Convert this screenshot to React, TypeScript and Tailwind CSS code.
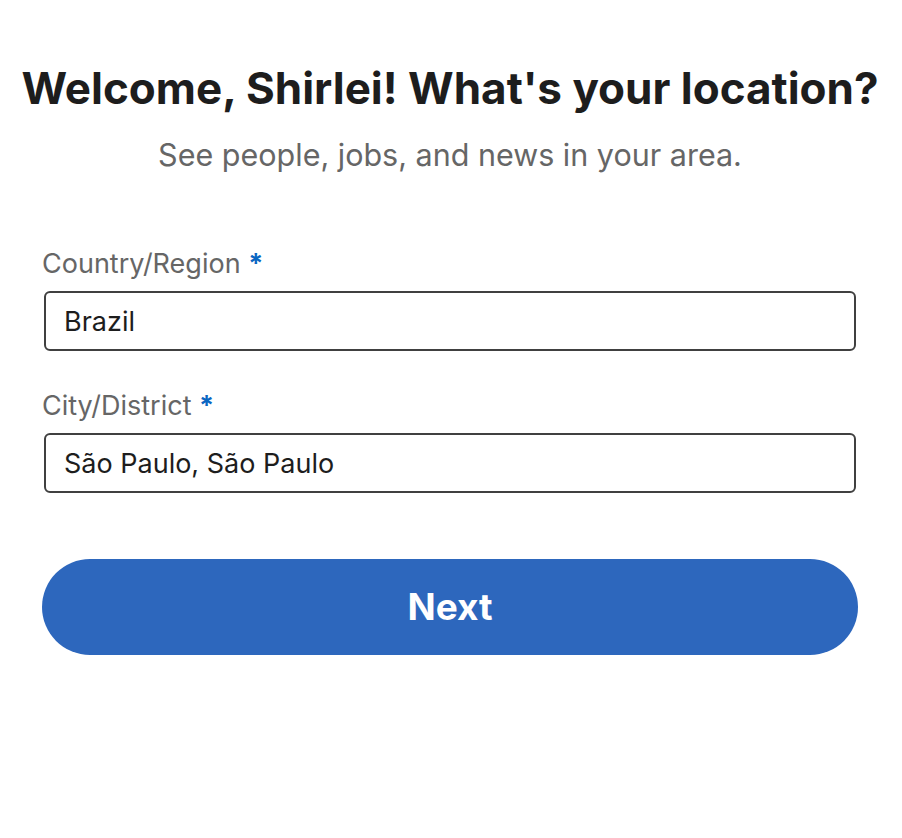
import { useState } from 'react';

export default function App() {
  const [country, setCountry] = useState('Brazil');
  const [city, setCity] = useState('São Paulo, São Paulo');

  return (
    <div
      className="min-h-screen w-full bg-white"
      style={{ fontFamily: 'Inter, "Noto Sans", sans-serif' }}
    >
      <div className="flex flex-col pl-[42px] pr-[44px] pt-[62px]">
        {/* 제목 */}
        <h1 className="text-center text-[44px] leading-[52px] font-bold text-[#1d1d1d] whitespace-nowrap -mx-[30px]">
          Welcome, Shirlei! What's your location?
        </h1>
        <p className="mt-[24px] text-center text-[30.5px] leading-[34px] text-[#666666]">
          See people, jobs, and news in your area.
        </p>

        {/* 국가 */}
        <label className="mt-[76px] text-[27px] leading-[32px] text-[#666666]">
          Country/Region <span className="text-[#0a66c2] font-bold">*</span>
        </label>
        <input
          value={country}
          onChange={(e) => setCountry(e.target.value)}
          className="mt-[11px] mx-[2px] h-[60px] rounded-[6px] border-2 border-[#404040] px-[18px] text-[27px] text-[#1d1d1d] outline-none"
        />

        {/* 도시 */}
        <label className="mt-[39px] text-[27px] leading-[32px] text-[#666666]">
          City/District <span className="text-[#0a66c2] font-bold">*</span>
        </label>
        <input
          value={city}
          onChange={(e) => setCity(e.target.value)}
          className="mt-[11px] mx-[2px] h-[60px] rounded-[6px] border-2 border-[#404040] px-[18px] text-[27px] text-[#1d1d1d] outline-none"
        />

        <button className="mt-[66px] h-[96px] w-full rounded-full bg-[#2d67bd] text-[37px] font-bold text-white">
          Next
        </button>
      </div>
    </div>
  );
}
